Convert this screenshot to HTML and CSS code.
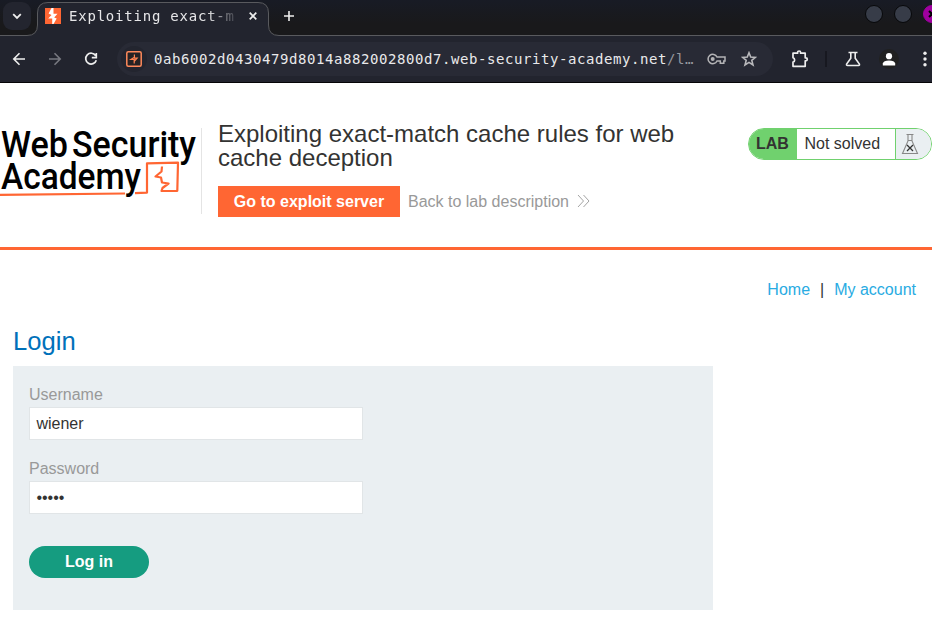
FILE: index.html
```html
<!DOCTYPE html>
<html lang="en">
<head>
<meta charset="utf-8">
<title>Exploiting exact-match cache rules for web cache deception</title>
<link rel="stylesheet" href="styles.css">
</head>
<body>
<div class="browser">
  <div class="tabstrip">
    <button class="tab-search" aria-label="Search tabs"><svg width="10" height="7" viewBox="0 0 10 7"><path d="M1.2 1.2 5 5 8.8 1.2" fill="none" stroke="#eee" stroke-width="1.8"/></svg></button>
    <svg class="tab-shape" width="932" height="36" viewBox="0 0 932 36"><path d="M0 35.5H27Q37.500 35.500 37.500 25V13Q37.500 2.500 48 2.500H258Q268.500 2.500 268.500 13V25Q268.500 35.500 279 35.500H932V37H0Z" fill="#22242e" stroke="#595a5e"/></svg>
    <div class="tab">
      <svg class="favicon" width="16" height="16" viewBox="0 0 16 16"><path fill="#ff6633" d="M0 0h16v16H0z"/><path fill="#fff" d="M6.500 0h2v5.800H12.500L9.200 9.500l2.500 1L8.500 16H7.200v-5.500H3.200L6.500 7 3.600 5.600z"/></svg>
      <span class="tab-title">Exploiting exact-m</span>
      <svg class="tab-close" width="8" height="8" viewBox="0 0 8 8"><path d="m.7.7 6.600 6.600m0-6.600L.7 7.300" stroke="#eee" stroke-width="1.700"/></svg>
    </div>
    <svg class="new-tab" width="10" height="10" viewBox="0 0 10 10"><path d="M5 0v10M0 5h10" stroke="#eee" stroke-width="1.600"/></svg>
    <div class="window-controls"><i></i><i></i><i class="close"><svg width="8" height="8" viewBox="0 0 8 8"><path d="m1 1 6 6m0-6L1 7" stroke="#000" stroke-width="2"/></svg></i></div>
  </div>
  <div class="toolbar">
    <svg class="back" width="14" height="14" viewBox="0 0 14 14"><path d="M13 7H2m5.500-5.700L1.800 7l5.700 5.700" fill="none" stroke="#eee" stroke-width="1.600"/></svg>
    <svg class="forward" width="14" height="14" viewBox="0 0 14 14"><path d="M1 7h11M6.500 1.300 12.200 7l-5.700 5.700" fill="none" stroke="#777880" stroke-width="1.600"/></svg>
    <svg class="reload" width="14" height="14" viewBox="0 0 14 14"><path d="M11.700 3.700A5.400 5.400 0 1 0 12.300 8.200M12.300 1v4.700H7.800" fill="none" stroke="#eee" stroke-width="1.700"/></svg>
    <div class="address">
      <span class="site"><svg width="16" height="16" viewBox="0 0 16 16"><rect x=".8" y=".8" width="14.400" height="14.400" rx="1.500" fill="#252224" stroke="#ff8a5c" stroke-width="1.500"/><path d="M8.400 3.500v2.700L5 8.300h3.200v4.200M8.200 7.200h2.900L8.500 10" fill="none" stroke="#ff8250" stroke-width="1.200"/></svg></span>
      <span class="url">0ab6002d0430479d8014a882002800d7.web-security-academy.net<span class="path">/l…</span></span>
      <svg class="key" width="19" height="12" viewBox="0 0 19 12"><path d="M10 4H18v4h-1.200v2.200h-3.500V8H10A4.700 4.700 0 1 1 10 4Z" fill="none" stroke="#b3b3b5" stroke-width="1.500"/><circle cx="5.700" cy="6" r="2" fill="#b3b3b5"/></svg>
      <svg class="star" width="16" height="16" viewBox="0 0 16 16"><path d="m8 1.800 1.700 4.300 4.700.3-3.600 3 1.200 4.600L8 11.400 4 14l1.200-4.600-3.600-3 4.700-.3Z" fill="none" stroke="#b9b9bc" stroke-width="1.600"/></svg>
    </div>
    <svg class="puzzle" width="18" height="18" viewBox="0 0 18 18"><path d="M2 3.200h4.600V2.500a1.500 1.500 0 0 1 3 0v.7h4.600v4.600h.6a1.500 1.500 0 0 1 0 3h-.6v5.500H2v-4.200a2.300 2.300 0 0 0 0-4.400Z" fill="none" stroke="#eee" stroke-width="1.700" stroke-linejoin="round"/></svg>
    <span class="separator"></span>
    <svg class="labs" width="16" height="16" viewBox="0 0 16 16"><path d="M3.500 1.500h9M5.800 2v5.200L1.600 13.100Q1.200 14.500 2.500 14.500h11Q14.800 14.500 14.400 13.100L10.200 7.200V2" fill="none" stroke="#eee" stroke-width="1.600"/></svg>
    <span class="profile"><svg width="14" height="13" viewBox="0 0 14 13"><circle cx="7" cy="3.200" r="3.100" fill="#fff"/><path d="M.8 12.500v-2Q1.500 7.500 7 7.500t6.200 3v2Z" fill="#fff"/></svg></span>
    <svg class="more" width="4" height="16" viewBox="0 0 4 16" fill="#eee"><circle cx="2" cy="2.300" r="1.700"/><circle cx="2" cy="8" r="1.700"/><circle cx="2" cy="13.700" r="1.700"/></svg>
  </div>
</div>
<header class="lab-header">
  <svg class="logo" width="201" height="86" viewBox="0 0 201 86">
    <g fill="none" stroke="#ff6633" stroke-width="2.200" stroke-linejoin="round"><path d="M0 66.800 125 65.500M135 65.200 147 64.600V35.300L178 34.700 177.300 62.800 161.500 63 162.500 60 168.500 55.500 162 54.500 161 49.500 155.500 48.500 161.500 43.500 162 38.500"/></g>
    <g class="logo-text"><text x="1" y="29" textLength="67" lengthAdjust="spacingAndGlyphs">Web</text><text x="72" y="29" textLength="124" lengthAdjust="spacingAndGlyphs">Security</text><text x="1" y="61" textLength="140" lengthAdjust="spacingAndGlyphs">Academy</text></g>
  </svg>
  <div class="lab-info">
    <h1>Exploiting exact-match cache rules for web cache deception</h1>
    <div class="actions"><a class="exploit">Go to exploit server</a><a class="description">Back to lab description <svg width="13" height="14" viewBox="0 0 13 14"><path d="m1 1 5.500 6L1 13M6.500 1 12 7l-5.500 6" fill="none" stroke="#999" stroke-width=".9"/></svg></a></div>
  </div>
  <div class="status"><strong>LAB</strong><span>Not solved</span><em><svg width="18" height="22" viewBox="0 0 18 22"><path d="M5.500 1.500h7M7 2v6L1.500 20.500h15L11 8V2M7 7.500h4" fill="none" stroke="#888" stroke-width="1.100"/><path d="m6 12 6 6m0-6-6 6" stroke="#333" stroke-width="1.300"/></svg></em></div>
</header>
<main>
  <nav><a>Home</a><span>|</span><a>My account</a></nav>
  <h2>Login</h2>
  <form class="login">
    <label for="username">Username</label>
    <input id="username" type="text" value="wiener">
    <label for="password">Password</label>
    <input id="password" type="password" value="peter">
    <button type="button">Log in</button>
  </form>
</main>
</body>
</html>
```
FILE: styles.css
```css
* { box-sizing: border-box; }
body { margin: 0; height: 627px; overflow: hidden; background: #fff; color: #333332; font: 16px/1.15 "Liberation Sans", Arial, sans-serif; }
svg { display: block; flex: none; }
.browser { height: 83px; overflow: hidden; font-family: "DejaVu Sans Mono", monospace; }
.tabstrip { position: relative; display: flex; height: 36px; background: linear-gradient(#181b25, #19191b 65%); }
.tab-search { position: relative; z-index: 1; display: flex; align-items: center; justify-content: center; width: 28px; height: 28px; margin: 2px 0 0 3px; padding: 0; border: 0; border-radius: 9px; background: #23252f; }
.tab-shape { position: absolute; left: 0; top: 0; }
.tab { position: relative; display: flex; align-items: center; width: 232px; height: 32px; margin-left: 6px; padding-left: 8px; }
.tab-title { width: 168px; margin: 0 12px 0 8px; overflow: hidden; white-space: nowrap; color: #e6e6e8; font-size: 14px; letter-spacing: .78px; -webkit-mask-image: linear-gradient(90deg, #000 82%, transparent 102%); mask-image: linear-gradient(90deg, #000 82%, transparent 102%); }
.new-tab { position: relative; margin: 11px 0 0 15px; }
.window-controls { position: relative; display: flex; gap: 11px; margin: 5px -9px 0 auto; }
.window-controls i { width: 18px; height: 18px; border: 1px solid #07080a; border-radius: 50%; background: #373c48; }
.window-controls .close { display: flex; align-items: center; justify-content: center; border-color: #a000a0; background: #a000a0; }
.toolbar { display: flex; align-items: center; height: 47px; background: #22242e; border-bottom: 1px solid #050507; }
.back { margin-left: 12px; }
.forward { margin-left: 22px; }
.reload { margin-left: 22px; }
.address { display: flex; align-items: center; width: 656px; height: 34px; margin-left: 19px; border-radius: 17px; background: #282a35; }
.site { display: flex; align-items: center; justify-content: center; width: 26px; height: 26px; margin-left: 4px; border-radius: 50%; background: #23252f; }
.url { width: 545px; margin-left: 7px; color: #e9e9eb; white-space: nowrap; font-size: 14px; letter-spacing: .572px; }
.path { color: #96979d; }
.key { margin-left: 8px; }
.star { margin-left: 15px; }
.puzzle { margin-left: 18px; }
.separator { width: 2px; height: 16px; margin-left: 16px; background: #171820; }
.labs { margin-left: 18px; }
.profile { display: flex; align-items: center; justify-content: center; width: 20px; height: 20px; margin-left: 18px; border-radius: 50%; background: #202020; }
.more { margin-left: 24px; }
.lab-header { display: flex; height: 167px; padding-top: 39px; border-bottom: 3px solid #ff6633; }
.logo { margin-top: 6px; overflow: visible; }
.logo-text { fill: #000; font: 500 37px Roboto, sans-serif; }
.lab-info { position: relative; width: 530px; padding-left: 17px; }
.lab-info::before { content: ""; position: absolute; left: 0; top: 6px; width: 1px; height: 86px; background: #e4e4e4; }
h1 { width: 490px; margin: 0; font-size: 24px; line-height: 24px; font-weight: 400; }
.actions { display: flex; margin-top: 16px; line-height: 31px; }
.exploit { width: 182px; height: 31px; text-align: center; color: #fff; background: #ff6633; font-weight: 700; }
.description { display: flex; align-items: center; gap: 8px; margin-left: 8px; color: #999; white-space: nowrap; }
.description svg { margin-top: -1px; }
.status { display: flex; width: 184px; height: 32px; margin: 6px 0 0 17px; border: 1px solid #70d16e; border-radius: 16px; overflow: hidden; line-height: 30px; background: #fff; }
.status strong { width: 48px; padding-left: 7px; background: #70d16e; }
.status span { width: 99px; padding-left: 7.500px; border-right: 1px solid #70d16e; }
.status em { flex: 1; padding: 4px 0 0 5px; background: #eaeff2; }
nav { display: flex; gap: 10px; justify-content: flex-end; padding: 31px 16px 0 0; line-height: 18px; }
nav a { color: #29abe2; }
h2 { margin: 26px 0 8px 13px; color: #0071ba; font-size: 25.600px; line-height: 33px; font-weight: 400; }
.login { width: 700px; height: 244px; margin-left: 13px; padding: 20px 16px; background: #eaeff2; }
.login label { display: block; height: 21px; color: #999; line-height: 18px; }
.login input { display: block; width: 334px; height: 33px; margin-bottom: 20px; padding: 0 6.400px; border: 1px solid #e1e5e7; border-radius: 0; outline: 0; background: #fff; color: #333332; font: 16px "Liberation Sans", Arial, sans-serif; }
.login button { width: 120px; height: 32px; margin-top: 12px; padding: 0; border: 0; border-radius: 16px; background: #159c80; color: #fff; font: 700 16px "Liberation Sans", Arial, sans-serif; }
```
